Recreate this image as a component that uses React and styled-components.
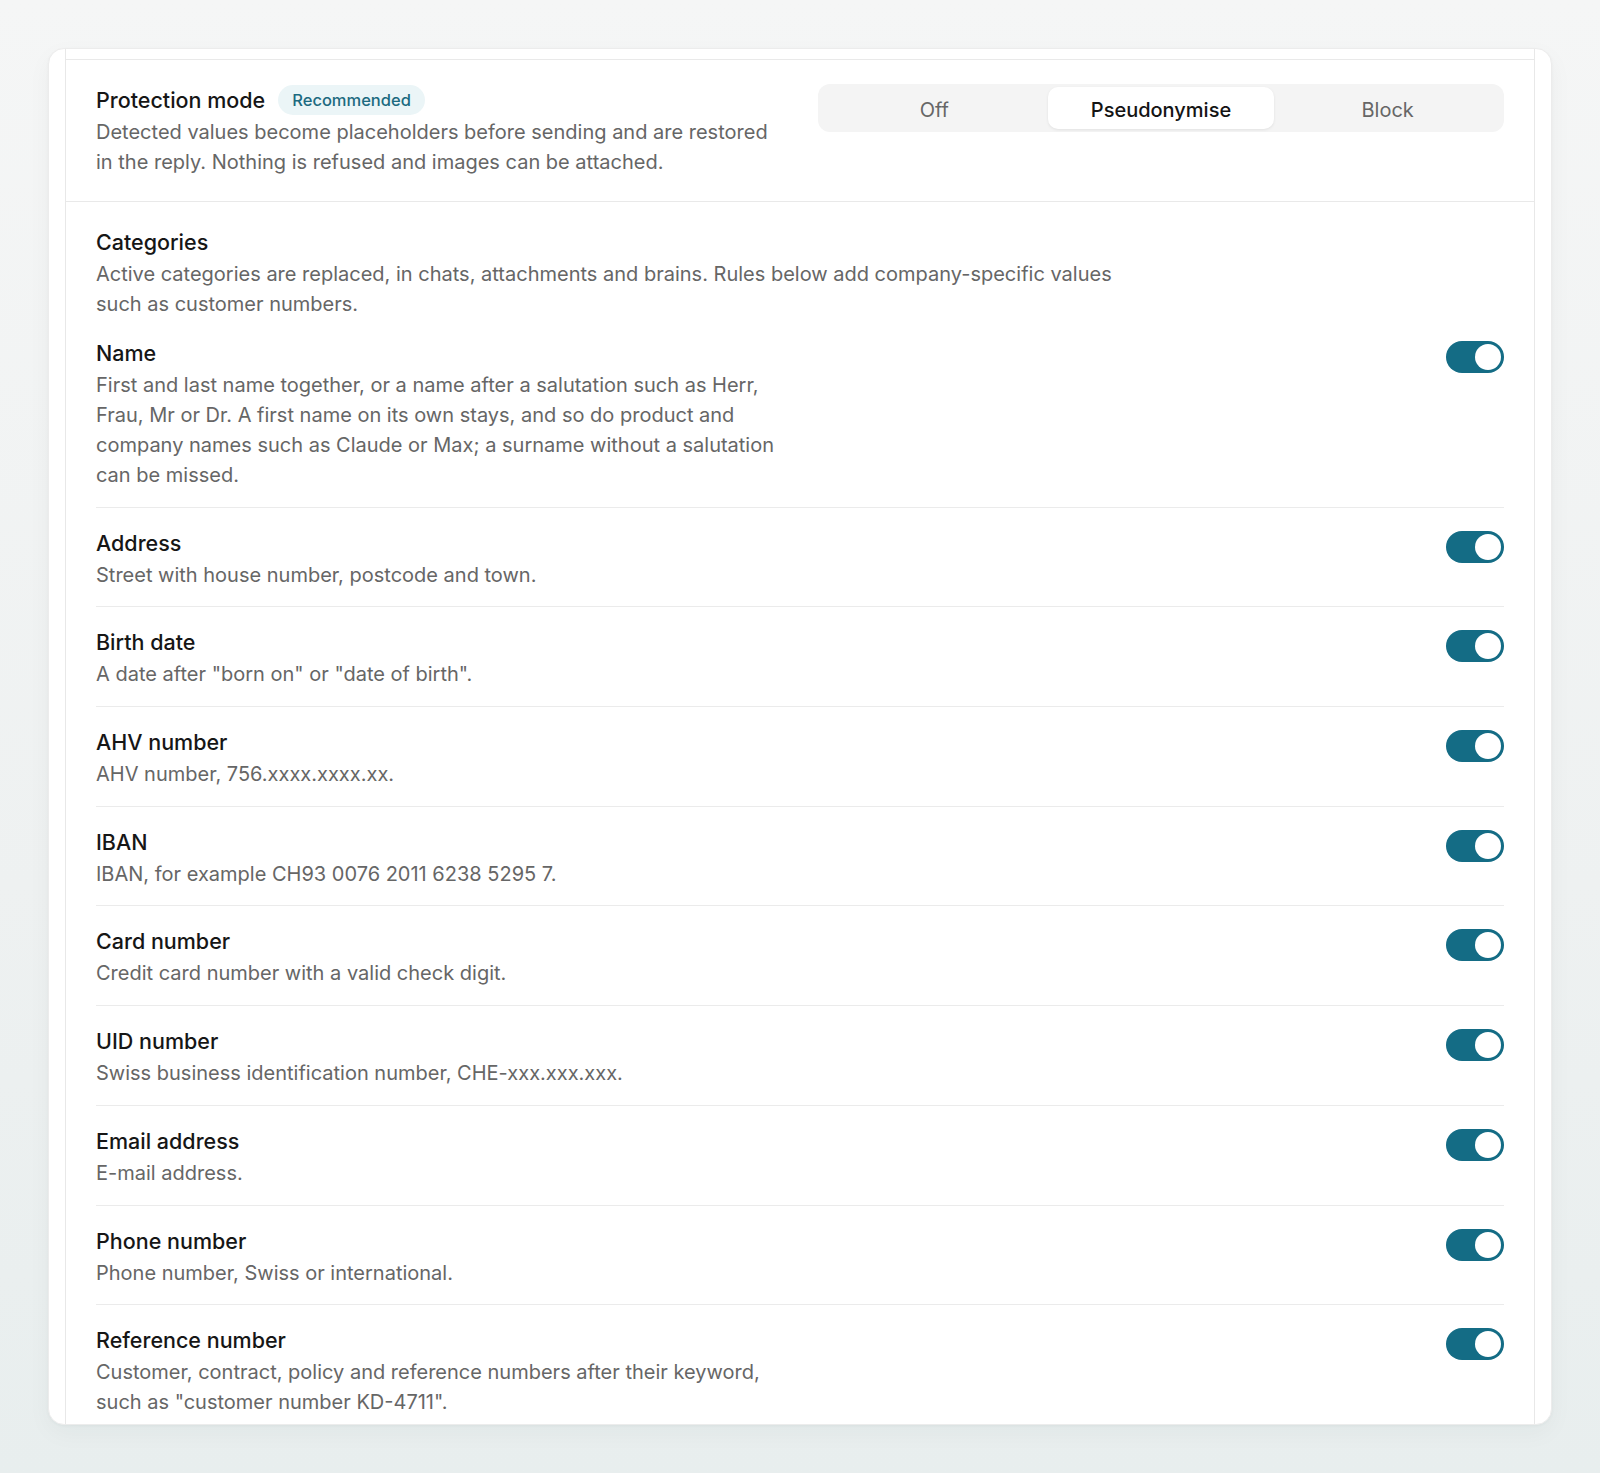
import React, { useState } from "react";
import styled, { createGlobalStyle } from "styled-components";

const GlobalStyle = createGlobalStyle`
  * { box-sizing: border-box; }
  html, body { margin: 0; padding: 0; }
  body {
    font-family: Inter, "Noto Sans", "Liberation Sans", sans-serif;
    background: linear-gradient(180deg, #f5f6f6 0%, #eef1f1 60%, #e8eeee 100%);
    color: #1a1a1a;
    -webkit-font-smoothing: antialiased;
  }
`;

const Page = styled.div`
  height: 100vh;
  padding: 48px;
  display: flex;
`;

const Card = styled.div`
  flex: 1;
  display: flex;
  flex-direction: column;
  background: #ffffff;
  border: 1px solid #ececec;
  border-radius: 16px;
  padding: 0 16px;
  overflow: hidden;
  box-shadow: 0 1px 3px rgba(20, 40, 40, 0.04), 0 8px 24px rgba(20, 40, 40, 0.04);
`;

const Panel = styled.div`
  flex: 1;
  display: flex;
  flex-direction: column;
  border-left: 1px solid #e8e8e8;
  border-right: 1px solid #e8e8e8;
  overflow: hidden;
`;

const PrevTail = styled.div`
  height: 10px;
  flex-shrink: 0;
`;

const Section = styled.section`
  border-top: 1px solid #e9e9e9;
  padding: 23px 30px 24px;
  flex-shrink: 0;
`;

const HeaderRow = styled.div`
  display: flex;
  justify-content: space-between;
  align-items: flex-start;
  gap: 40px;
`;

const TextBlock = styled.div`
  max-width: ${(p) => p.$max || 690}px;
`;

const TitleLine = styled.div`
  display: flex;
  align-items: center;
  gap: 13px;
  height: 34px;
`;

const Title = styled.div`
  font-size: 21.5px;
  font-weight: 500;
  line-height: 34px;
  color: #161616;
`;

const Badge = styled.span`
  display: inline-flex;
  align-items: center;
  height: 30px;
  padding: 0 14px;
  border-radius: 999px;
  background: #ebf5f7;
  color: #1c6a80;
  font-size: 16.5px;
  font-weight: 500;
`;

const Desc = styled.p`
  margin: 0;
  font-size: 20px;
  line-height: 30px;
  color: #666666;
`;

const Segmented = styled.div`
  flex: 0 0 686px;
  display: grid;
  grid-template-columns: repeat(3, 1fr);
  padding: 3px;
  height: 48px;
  margin-top: 1px;
  border-radius: 12px;
  background: #f4f4f4;
`;

const Segment = styled.button`
  border: none;
  border-radius: 10px;
  padding: 3px 0 0;
  font-family: inherit;
  font-size: 20px;
  font-weight: ${(p) => (p.$active ? 500 : 400)};
  color: ${(p) => (p.$active ? "#141414" : "#666666")};
  background: ${(p) => (p.$active ? "#ffffff" : "transparent")};
  box-shadow: ${(p) => (p.$active ? "0 1px 3px rgba(0,0,0,0.08)" : "none")};
  cursor: pointer;
`;

const Rows = styled.div`
  display: flex;
  flex-direction: column;
`;

const Row = styled.div`
  display: flex;
  justify-content: space-between;
  align-items: flex-start;
  gap: 40px;
  padding: ${(p) => (p.$first ? "17px" : "18px")} 0 16.7px;
  border-top: ${(p) => (p.$first ? "none" : "1px solid #ebebeb")};
`;

const Toggle = styled.button`
  position: relative;
  flex: 0 0 58px;
  width: 58px;
  height: 32px;
  margin-top: 5px;
  border: none;
  padding: 0;
  border-radius: 999px;
  background: ${(p) => (p.$on ? "#146c85" : "#d4d4d4")};
  cursor: pointer;

  &::after {
    content: "";
    position: absolute;
    top: 3px;
    left: ${(p) => (p.$on ? "29px" : "3px")};
    width: 26px;
    height: 26px;
    border-radius: 50%;
    background: #ffffff;
  }
`;

const categories = [
  {
    title: "Name",
    desc: "First and last name together, or a name after a salutation such as Herr, Frau, Mr or Dr. A first name on its own stays, and so do product and company names such as Claude or Max; a surname without a salutation can be missed.",
  },
  { title: "Address", desc: "Street with house number, postcode and town." },
  { title: "Birth date", desc: 'A date after "born on" or "date of birth".' },
  { title: "AHV number", desc: "AHV number, 756.xxxx.xxxx.xx." },
  { title: "IBAN", desc: "IBAN, for example CH93 0076 2011 6238 5295 7." },
  { title: "Card number", desc: "Credit card number with a valid check digit." },
  { title: "UID number", desc: "Swiss business identification number, CHE-xxx.xxx.xxx." },
  { title: "Email address", desc: "E-mail address." },
  { title: "Phone number", desc: "Phone number, Swiss or international." },
  {
    title: "Reference number",
    desc: 'Customer, contract, policy and reference numbers after their keyword, such as "customer number KD-4711".',
  },
];

export default function App() {
  const [mode, setMode] = useState("Pseudonymise");
  const [on, setOn] = useState(() => categories.map(() => true));

  return (
    <>
      <GlobalStyle />
      <Page>
        <Card>
          <Panel>
            <PrevTail />
            <Section>
              <HeaderRow>
                <TextBlock $max={690}>
                  <TitleLine>
                    <Title>Protection mode</Title>
                    <Badge>Recommended</Badge>
                  </TitleLine>
                  <Desc>
                    Detected values become placeholders before sending and are restored in the
                    reply. Nothing is refused and images can be attached.
                  </Desc>
                </TextBlock>
                <Segmented>
                  {["Off", "Pseudonymise", "Block"].map((m) => (
                    <Segment key={m} $active={mode === m} onClick={() => setMode(m)}>
                      {m}
                    </Segment>
                  ))}
                </Segmented>
              </HeaderRow>
            </Section>
            <Section>
              <TextBlock $max={1040}>
                <Title>Categories</Title>
                <Desc>
                  Active categories are replaced, in chats, attachments and brains. Rules below add
                  company-specific values such as customer numbers.
                </Desc>
              </TextBlock>
              <Rows>
                {categories.map((c, i) => (
                  <Row key={c.title} $first={i === 0}>
                    <TextBlock $max={690}>
                      <Title>{c.title}</Title>
                      <Desc>{c.desc}</Desc>
                    </TextBlock>
                    <Toggle
                      $on={on[i]}
                      aria-label={c.title}
                      onClick={() => setOn((prev) => prev.map((v, j) => (j === i ? !v : v)))}
                    />
                  </Row>
                ))}
              </Rows>
            </Section>
          </Panel>
        </Card>
      </Page>
    </>
  );
}
